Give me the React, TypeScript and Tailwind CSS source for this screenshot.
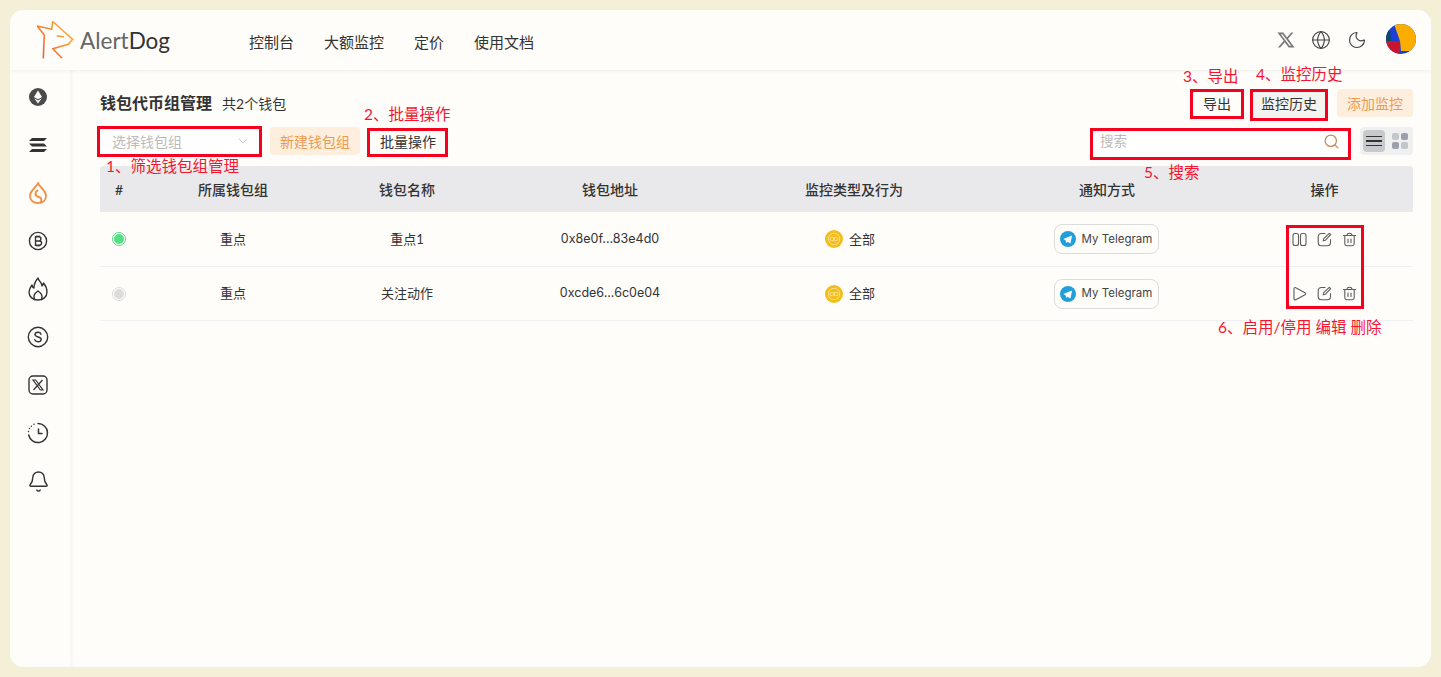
import { Bell, Globe, Moon, Search, ChevronDown } from "lucide-react";
import { RiTwitterXLine } from "react-icons/ri";

const cjk = "font-['Lato','Noto_Sans_CJK_SC',sans-serif]";
const latin = "font-['Inter','Noto_Sans_CJK_SC',sans-serif]";

const rows = [
  { active: true, group: "重点", name: "重点1", addr: "0x8e0f...83e4d0" },
  { active: false, group: "重点", name: "关注动作", addr: "0xcde6...6c0e04" },
];

const cols = "grid grid-cols-[38px_190px_158px_248px_240px_266px_173px] items-center text-center";

function Logo() {
  return (
    <svg width="38" height="38" viewBox="0 0 38 38" fill="none" strokeWidth="1.600" strokeLinejoin="round" strokeLinecap="round">
      <defs>
        <linearGradient id="dog" gradientUnits="userSpaceOnUse" x1="2" y1="34" x2="32" y2="8">
          <stop offset="0" stopColor="#ee5a2c" />
          <stop offset="1" stopColor="#fbb03b" />
        </linearGradient>
      </defs>
      <path
        d="M6.300 36.700 L7.300 14 L0.300 5 L14.700 8.300 L15.700 0.500 L26.300 10 L35.700 18.300 L31.300 23.300 L15.700 27.700 L24.700 36.700"
        stroke="url(#dog)"
      />
      <path d="M20.300 15 L26.300 15.700" stroke="#f59a3c" />
    </svg>
  );
}

function EthIcon() {
  return (
    <svg width="20" height="20" viewBox="0 0 20 20">
      <circle cx="10" cy="10" r="9" fill="#4a4a4a" />
      <path d="M10 3.500 L14 10 L10 12.300 L6 10Z" fill="#fff" />
      <path d="M6.200 11.200 L10 13.500 L13.800 11.200 L10 16.500Z" fill="#fff" />
    </svg>
  );
}

function SolIcon() {
  return (
    <svg width="20" height="16" viewBox="0 0 20 16" fill="#333">
      <path d="M4 1h15l-3 3H1z" />
      <path d="M1 6.500h15l3 3H4z" />
      <path d="M4 12h15l-3 3H1z" />
    </svg>
  );
}

function DropIcon() {
  return (
    <svg width="20" height="24" viewBox="0 0 20 24" fill="none" stroke="#f0924a" strokeWidth="1.900" strokeLinejoin="round">
      <path d="M10 2 C11 6 18 9 18 15 C18 19.500 14.500 22 10 22 C5.500 22 2 19.500 2 15 C2 9 9 6 10 2Z" />
      <path d="M10 9 C6 12 7 15 11 16 C14 17 14 20 12 22" />
    </svg>
  );
}

function BtcIcon() {
  return (
    <svg width="20" height="20" viewBox="0 0 20 20" fill="none" stroke="#333" strokeWidth="1.400">
      <circle cx="10" cy="10" r="8.600" />
      <path d="M7.500 5.800h3.300a2 2 0 0 1 0 4.200H7.500h4a2.100 2.100 0 0 1 0 4.200H7.500z M9 4.500v1.300 M11 4.500v1.300 M9 14.200v1.300 M11 14.200v1.300" />
    </svg>
  );
}

function FlameIcon() {
  return (
    <svg width="22" height="24" viewBox="0 0 22 24" fill="none" stroke="#333" strokeWidth="1.400" strokeLinejoin="round" strokeLinecap="round">
      <path d="M11 1 C12 5 15 5 15 9 C16 8 16.500 7 16.500 6 C19 9 20 12 20 15 C20 20 16 23 11 23 C6 23 2 20 2 15 C2 12 3.500 10 5 8 C5.500 10 6 11 7 11 C7 7 8.500 4 11 1Z" />
      <path d="M7.500 22.500 C6 19 8 16 11 14 C14 16 16 19 14.500 22.500" />
    </svg>
  );
}

function DollarIcon() {
  return (
    <svg width="22" height="22" viewBox="0 0 22 22" fill="none" stroke="#333" strokeWidth="1.400" strokeLinecap="round">
      <circle cx="11" cy="11" r="9.700" />
      <path d="M14 8.200c-.4-1.200-1.600-1.900-3-1.900-1.700 0-3 .9-3 2.300 0 3.200 6.200 1.600 6.200 4.800 0 1.400-1.400 2.300-3.200 2.300-1.500 0-2.800-.8-3.200-2" />
    </svg>
  );
}

function XBoxIcon() {
  return (
    <svg width="20" height="20" viewBox="0 0 20 20" fill="none" stroke="#333" strokeWidth="1.400">
      <rect x="1" y="1" width="18" height="18" rx="4" />
      <path d="M5 5h2.600l7.400 10h-2.600z M14.500 5 L5.500 15" strokeWidth="1.200" />
    </svg>
  );
}

function ClockIcon() {
  return (
    <svg width="22" height="22" viewBox="0 0 22 22" fill="none" stroke="#333" strokeWidth="1.500" strokeLinecap="round">
      <path d="M11 1.500a9.500 9.500 0 1 1-9.300 11.500" />
      <path d="M11.500 7v4.500h3.500" />
      <path d="M1.500 9.500v.01M2.500 6.500v.01M4.300 4.200v.01M7 2.300v.01" />
    </svg>
  );
}

function BellIcon() {
  return <Bell size={23} strokeWidth={1.500} className="text-[#333]" />;
}

function TrashIcon() {
  return (
    <svg width="15" height="15" viewBox="0 0 15 15" fill="none" stroke="#5c5c5c" strokeWidth="1.100" strokeLinecap="round" strokeLinejoin="round">
      <path d="M1.500 3.500h12 M5 3.500c0-1.500.8-2.200 2.500-2.200S10 2 10 3.500 M2.800 3.500v8.300c0 1.200.8 1.900 1.900 1.900h5.600c1.100 0 1.900-.7 1.900-1.900V3.500 M6 7v3.500 M9 7v3.500" />
    </svg>
  );
}

function PauseIcon() {
  return (
    <svg width="15" height="15" viewBox="0 0 15 15" fill="none" stroke="#5c5c5c" strokeWidth="1.100">
      <rect x="1" y="1.500" width="5.500" height="12" rx="2" />
      <rect x="8.500" y="1.500" width="5.500" height="12" rx="2" />
    </svg>
  );
}

function PlayIcon() {
  return (
    <svg width="15" height="15" viewBox="0 0 15 15" fill="none" stroke="#5c5c5c" strokeWidth="1.100" strokeLinejoin="round">
      <path d="M2 2.700c0-1 1-1.500 1.800-1l9.200 5c.8.500.8 1.500 0 2l-9.200 5c-.8.500-1.800 0-1.800-1z" />
    </svg>
  );
}

function EditIcon() {
  return (
    <svg width="15" height="15" viewBox="0 0 15 15" fill="none" stroke="#5c5c5c" strokeWidth="1.100" strokeLinecap="round" strokeLinejoin="round">
      <path d="M8 1.500H4.500C2.500 1.500 1.200 2.800 1.200 4.800v5.600c0 2 1.300 3.300 3.300 3.300h5.700c2 0 3.300-1.300 3.300-3.300V7.500" />
      <path d="M12.300 1.300 13.700 2.700 8.300 8.300 6.200 8.800 6.700 6.700z" />
    </svg>
  );
}

function CoinIcon() {
  return (
    <svg width="18" height="18" viewBox="0 0 18 18" fill="none">
      <circle cx="9" cy="9" r="9" fill="#f3bd1c" />
      <circle cx="9" cy="9" r="5.700" stroke="#fbe08a" strokeWidth="1" />
      <ellipse cx="7.200" cy="9" rx="2.300" ry="1.700" stroke="#fbe08a" strokeWidth="1" />
      <ellipse cx="10.800" cy="9" rx="2.300" ry="1.700" stroke="#fbe08a" strokeWidth="1" />
    </svg>
  );
}

function TelegramIcon() {
  return (
    <svg width="16" height="16" viewBox="0 0 16 16">
      <circle cx="8" cy="8" r="8" fill="#229ed9" />
      <path d="M3.300 7.900 11.400 4.700c.4-.1.700.1.600.6l-1.400 6.500c-.1.500-.4.600-.8.400L7.700 10.700l-1 1c-.2.200-.4.200-.5-.1L5.500 9.300z" fill="#fff" />
    </svg>
  );
}

function Avatar() {
  return (
    <svg width="30" height="30" viewBox="0 0 30 30" className="rounded-full">
      <rect width="30" height="30" fill="#1c3fd6" />
      <path d="M0 17 H5 L4 7 L0 3z" fill="#0c4a5e" />
      <path d="M0 17 H14 V30 H0z" fill="#c8142c" />
      <path d="M8 0 H30 V27 H15 L14 17z" fill="#fbae00" />
    </svg>
  );
}

function Note({ className, children }: { className: string; children: string }) {
  return <div className={`absolute z-20 whitespace-nowrap text-[15.500px] leading-5 text-[#f5152f] ${className}`}>{children}</div>;
}

function Box({ className }: { className: string }) {
  return <div className={`absolute z-20 border-[3px] border-[#f5001e] pointer-events-none ${className}`} />;
}

export default function App() {
  const navItems = ["控制台", "大额监控", "定价", "使用文档"];

  return (
    <div className={`relative h-[677px] w-[1441px] overflow-hidden bg-[#f4f0d7] p-[10px] text-[#333] ${cjk}`}>
      <div className="flex h-[657px] flex-col overflow-hidden rounded-[14px] bg-[#fefdf9]">
        <header className="z-10 flex h-[60px] shrink-0 items-center bg-[#fefdf9] shadow-[0_1px_4px_rgba(0,0,0,0.06)]">
          <div className="flex w-[239px] items-center pl-[27px]">
            <Logo />
            <span className="ml-[5px] mt-[3px] font-['Lato'] text-[22.500px] leading-none text-[#666]">
              Alert<span className="text-[#333]">Dog</span>
            </span>
          </div>
          <nav className="mt-[4px] flex gap-[30px] text-[15px] text-[#333]">
            {navItems.map((item) => (
              <span key={item}>{item}</span>
            ))}
          </nav>
          <div className="ml-auto flex items-center pr-[15px] text-[#444]">
            <RiTwitterXLine className="h-[20px] w-[20px] text-[#777]" />
            <Globe className="ml-[15px] h-[20px] w-[20px]" strokeWidth={1.400} />
            <Moon className="ml-[16px] h-[20px] w-[20px]" strokeWidth={1.400} />
            <div className="mb-[3px] ml-[19px]">
              <Avatar />
            </div>
          </div>
        </header>

        <div className="flex min-h-0 flex-1">
          <aside className="flex w-[60px] shrink-0 flex-col items-center bg-[#fefdf9] pr-[4px]">
            {[EthIcon, SolIcon, DropIcon, BtcIcon, FlameIcon, DollarIcon, XBoxIcon, ClockIcon, BellIcon].map((Icon, i) => (
              <div key={i} className="flex h-[48px] shrink-0 items-center justify-center first:mt-[3px]">
                <Icon />
              </div>
            ))}
          </aside>

          <main className="min-w-0 flex-1 bg-[#fefdfa] pl-[30px] pr-[18px] shadow-[inset_4px_0_4px_-2px_rgba(0,0,0,0.04)]">
            <div className="mt-[19px] flex h-[28px] items-center">
              <h1 className="text-[16px] font-bold text-[#333]">钱包代币组管理</h1>
              <span className="ml-[10px] text-[14px] text-[#333]">共2个钱包</span>
              <div className="ml-auto flex text-[14px]">
                <button className="h-[28px] w-[52px] rounded bg-[#fefdfa] text-[#333]">导出</button>
                <button className="ml-[9px] h-[28px] w-[74px] rounded bg-[#f3f3f0] text-[#333]">监控历史</button>
                <button className="ml-[11px] h-[28px] w-[76px] rounded bg-[#fdeedd] text-[#ee9a50]">添加监控</button>
              </div>
            </div>

            <div className="mt-[10px] flex h-[28px] items-center">
              <div className="flex h-[28px] w-[160px] items-center justify-between bg-white pl-[12px] pr-[9px] text-[14px] text-[#bbb]">
                <span>选择钱包组</span>
                <ChevronDown size={16} strokeWidth={1.200} />
              </div>
              <button className="ml-[10px] h-[28px] w-[90px] rounded bg-[#fdeedd] text-[14px] text-[#ee9a50]">新建钱包组</button>
              <button className="ml-[8px] h-[28px] w-[80px] rounded text-[14px] text-[#333]">批量操作</button>
              <div className="ml-auto flex h-[28px] w-[258px] items-center justify-between bg-white pl-[11px] pr-[7px] text-[13.500px] text-[#bbb]">
                <span>搜索</span>
                <Search size={17} strokeWidth={1.800} className="text-[#c98a55]" />
              </div>
              <div className="ml-[13px] flex h-[28px] w-[53px] items-center justify-between rounded bg-[#f0f0f0] px-[3px]">
                <div className="flex h-[22px] w-[22px] flex-col items-center justify-center gap-[3px] rounded bg-[#c7c9cc]">
                  <i className="block h-[1.500px] w-[16px] bg-[#333]" />
                  <i className="block h-[1.500px] w-[16px] bg-[#333]" />
                  <i className="block h-[1.500px] w-[16px] bg-[#333]" />
                </div>
                <div className="mr-[2px] grid h-[16px] w-[16px] grid-cols-2 gap-[2px]">
                  <i className="rounded-[2px] bg-[#c3c6cc]" />
                  <i className="rounded-[2px] bg-[#9aa1ad]" />
                  <i className="rounded-[2px] bg-[#9aa1ad]" />
                  <i className="rounded-[2px] bg-[#c3c6cc]" />
                </div>
              </div>
            </div>

            <div className={`${cols} mt-[11px] h-[46px] rounded-t bg-[#e9e9eb] text-[14px] font-medium text-[#333]`}>
              <span>#</span>
              <span>所属钱包组</span>
              <span>钱包名称</span>
              <span>钱包地址</span>
              <span>监控类型及行为</span>
              <span>通知方式</span>
              <span className="pr-[4px]">操作</span>
            </div>

            {rows.map((row) => (
              <div key={row.name} className={`${cols} h-[54.500px] border-b border-[#eff0f2] pt-[1px] text-[13px] text-[#333]`}>
                <span className="flex justify-center">
                  <span className={`flex h-[14px] w-[14px] items-center justify-center rounded-full border ${row.active ? "border-[#57dd86]" : "border-[#dcdcdc]"}`}>
                    <span className={`h-[10px] w-[10px] rounded-full ${row.active ? "bg-[#57dd86]" : "bg-[#dcdcdc]"}`} />
                  </span>
                </span>
                <span>{row.group}</span>
                <span>{row.name}</span>
                <span className={`${latin} text-[12.500px]`}>{row.addr}</span>
                <span className="flex items-center justify-center gap-[6px] pr-[8px]">
                  <CoinIcon />
                  全部
                </span>
                <span className="flex justify-center pr-[2px]">
                  <span className={`${latin} flex h-[30px] w-[105px] items-center justify-center gap-[6px] rounded-lg border border-[#dcdcdc] text-[11.500px] text-[#444]`}>
                    <TelegramIcon />
                    My Telegram
                  </span>
                </span>
                <span className="flex items-center justify-center gap-[10px] pr-[4px]">
                  {row.active ? <PauseIcon /> : <PlayIcon />}
                  <EditIcon />
                  <TrashIcon />
                </span>
              </div>
            ))}
          </main>
        </div>
      </div>

      <Box className="left-[97px] top-[126px] h-[31px] w-[165px]" />
      <Box className="left-[367px] top-[128px] h-[29px] w-[81px]" />
      <Box className="left-[1190px] top-[89px] h-[30px] w-[54px]" />
      <Box className="left-[1250px] top-[89px] h-[32px] w-[78px]" />
      <Box className="left-[1090px] top-[128px] h-[32px] w-[261px]" />
      <Box className="left-[1286px] top-[225px] h-[84px] w-[78px]" />

      <Note className="left-[106px] top-[156px]">1、筛选钱包组管理</Note>
      <Note className="left-[364px] top-[104px]">2、批量操作</Note>
      <Note className="left-[1183px] top-[66px]">3、导出</Note>
      <Note className="left-[1256px] top-[64px]">4、监控历史</Note>
      <Note className="left-[1144px] top-[162px]">5、搜索</Note>
      <Note className="left-[1218px] top-[317px]">6、启用/停用 编辑 删除</Note>
    </div>
  );
}
